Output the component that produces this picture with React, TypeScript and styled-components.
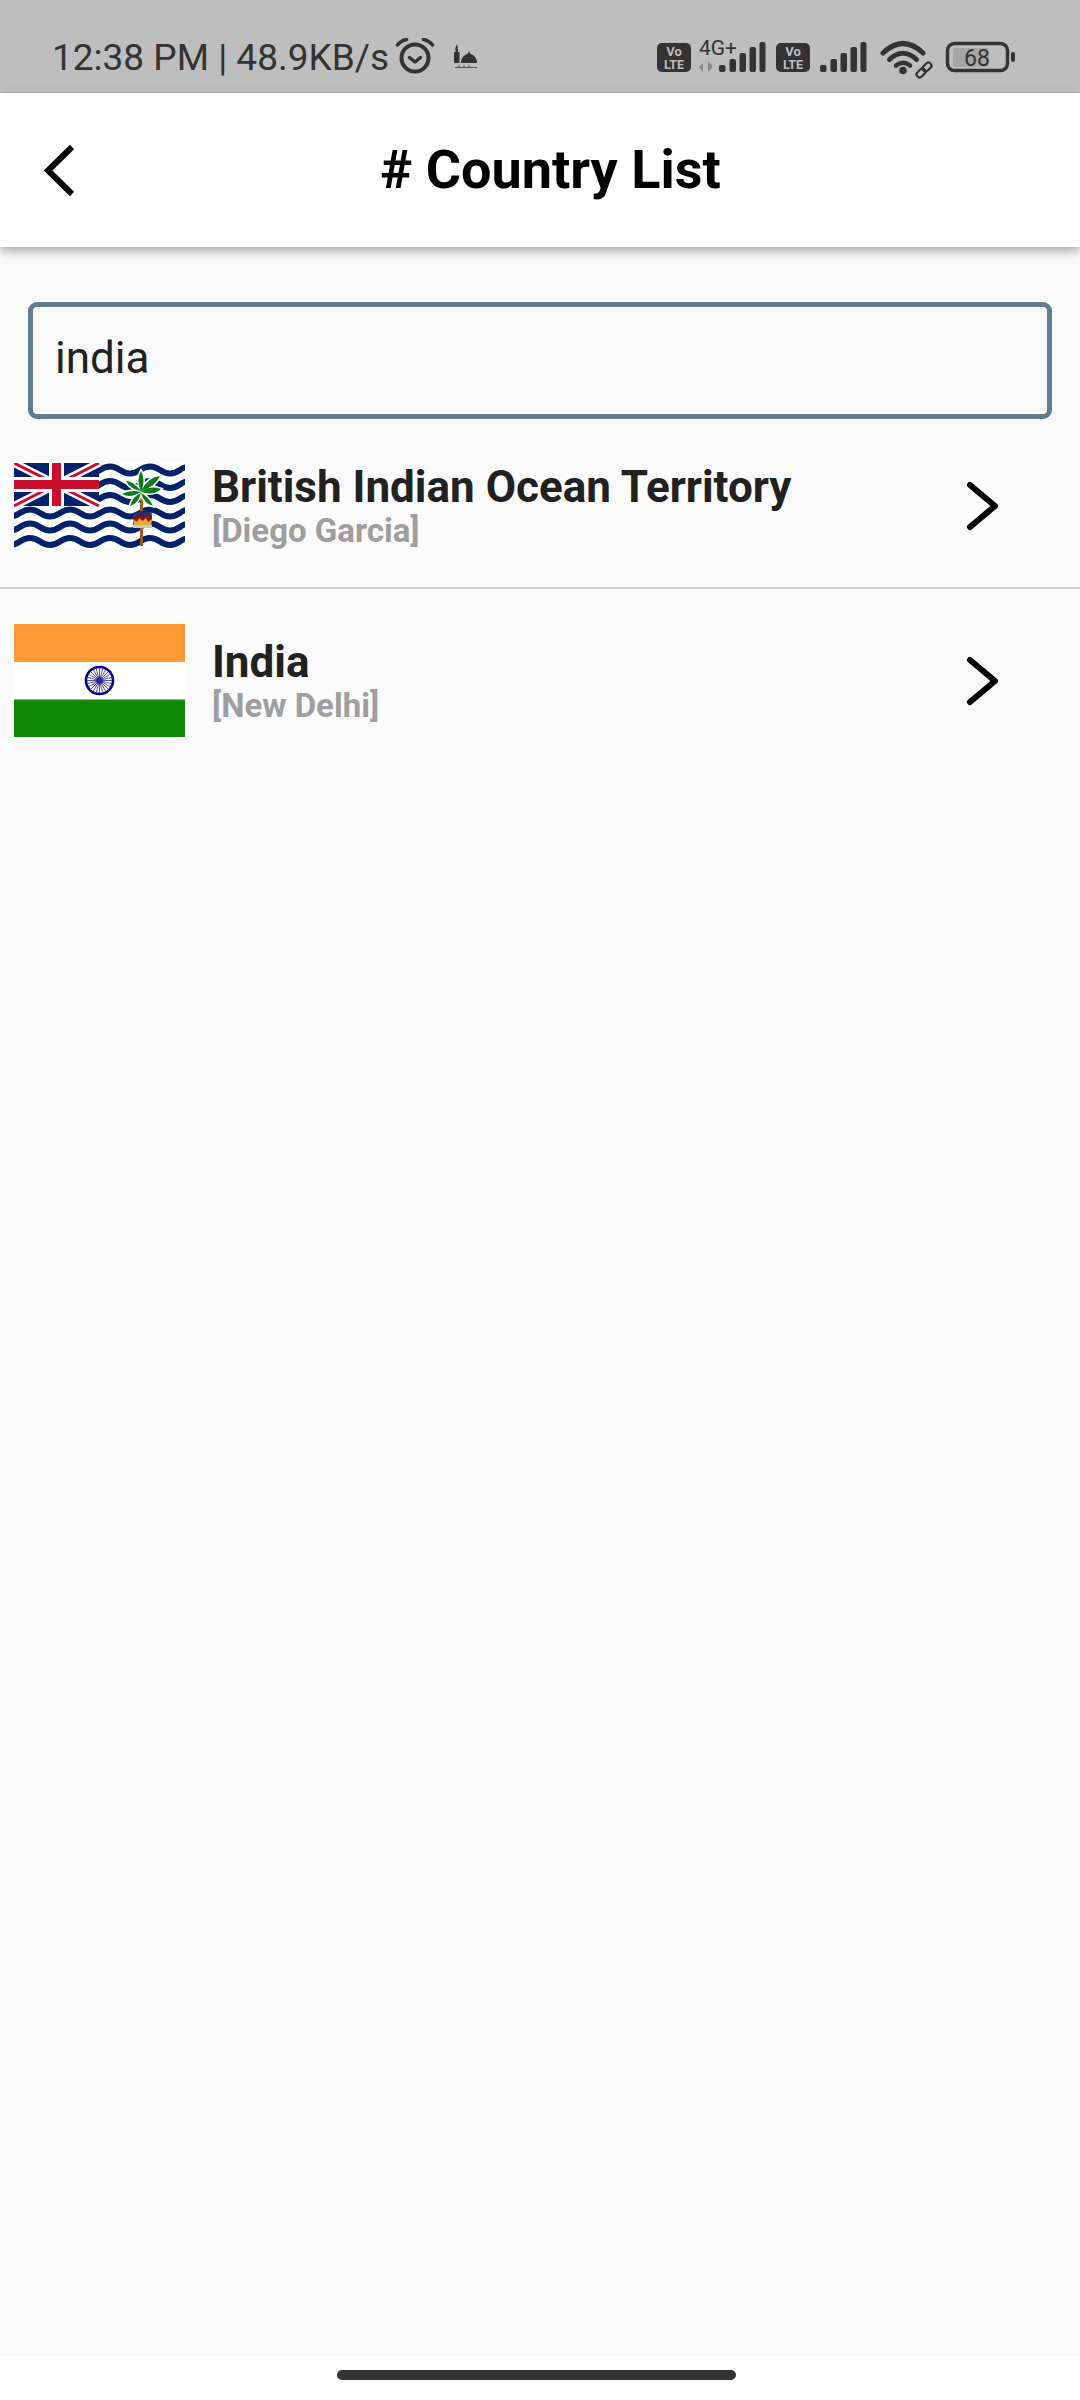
import React from "react";
import styled, { createGlobalStyle } from "styled-components";

const Global = createGlobalStyle`
  html, body { margin: 0; padding: 0; background: #fafafa; }
  * { box-sizing: border-box; }
`;

const Page = styled.div`
  width: 1080px;
  height: 2400px;
  display: flex;
  flex-direction: column;
  font-family: Roboto, "Liberation Sans", sans-serif;
  background: #fafafa;
  overflow: hidden;
`;

const StatusBar = styled.div`
  height: 93px;
  background: #bebebe;
  display: flex;
  align-items: flex-start;
  padding: 36px 0 0 52px;
  color: #333;
  flex: none;
`;

const StatusText = styled.span`
  font-size: 37px;
  line-height: 44px;
  white-space: nowrap;
`;

const AlarmIcon = styled.svg`
  width: 42px;
  height: 40px;
  margin: 2px 0 0 5px;
  flex: none;
`;

const MosqueIcon = styled.svg`
  width: 24px;
  height: 26px;
  margin: 7px 0 0 18px;
  flex: none;
`;

const StatusIcons = styled.svg`
  width: 364px;
  height: 50px;
  margin: 0 59px 0 auto;
  flex: none;
`;

const Header = styled.header`
  height: 154px;
  flex: none;
  background: #fff;
  box-shadow: 0 4px 10px rgba(0, 0, 0, 0.34);
  display: flex;
  align-items: center;
  justify-content: center;
  position: relative;
  padding-left: 21px;
`;

const BackButton = styled.svg`
  position: absolute;
  left: 40px;
  top: 50px;
  width: 40px;
  height: 56px;
`;

const Title = styled.h1`
  margin: 0;
  font-size: 54px;
  line-height: 60px;
  font-weight: 700;
  color: #000;
`;

const SearchBox = styled.div`
  margin: 55px 28px 0 28px;
  height: 117px;
  border: 5px solid #607d8b;
  border-radius: 9px;
  display: flex;
  align-items: center;
  padding: 0 0 6px 22px;
  font-size: 44px;
  color: #212121;
  flex: none;
`;

const List = styled.div`
  display: flex;
  flex-direction: column;
  flex: 1;
`;

const Row = styled.div<{ $height: number; $top: number; $divider?: boolean }>`
  display: flex;
  align-items: center;
  height: ${(p) => p.$height}px;
  padding: ${(p) => p.$top}px 0 0 14px;
  border-bottom: ${(p) => (p.$divider ? "2px solid #cdcdcd" : "none")};
  flex: none;
`;

const Flag = styled.svg<{ $height: number }>`
  width: 171px;
  height: ${(p) => p.$height}px;
  flex: none;
`;

const RowText = styled.div`
  margin-left: 27px;
  flex: 1;
  display: flex;
  flex-direction: column;
`;

const Name = styled.div`
  font-size: 44px;
  line-height: 50px;
  font-weight: 700;
  color: #212121;
`;

const Capital = styled.div`
  font-size: 33px;
  line-height: 38px;
  font-weight: 700;
  color: #9e9e9e;
`;

const Chevron = styled.svg`
  width: 36px;
  height: 56px;
  margin-right: 82px;
  flex: none;
`;

const NavBar = styled.div`
  height: 44px;
  background: #fff;
  flex: none;
  display: flex;
  justify-content: center;
  padding: 14px 7px 0 0;
`;

const NavPill = styled.div`
  width: 399px;
  height: 10px;
  border-radius: 5px;
  background: #333;
`;

const wave = (y: number, x0: number, x1: number) => {
  let d = `M${x0 - 40} ${y}`;
  for (let x = x0 - 40; x < x1; x += 40) {
    d += ` q10 -7 20 0 t20 0`;
  }
  return d;
};

const palmLeaves = [
  "M127 30Q122 16 127 8Q132 16 127 30Z",
  "M127 28Q134 14 146 13Q141 24 127 28Z",
  "M127 28Q118 17 112 18Q116 26 127 28Z",
  "M127 29Q136 22 147 26Q140 33 127 29Z",
  "M127 29Q117 26 108 31Q116 36 127 29Z",
  "M127 30Q119 33 116 43Q124 41 127 30Z",
  "M127 30Q134 33 139 43Q130 41 127 30Z",
];

const BiotFlag = () => (
  <Flag $height={85} viewBox="0 0 171 85">
    <rect width="171" height="85" fill="#fff" />
    {[7, 21.5, 35.5, 50, 64, 78.5].map((y) => (
      <path key={y} d={wave(y, 0, 215)} transform="translate(6 0)" fill="none" stroke="#012169" strokeWidth="5.8" />
    ))}
    <g>
      <rect x="0" y="0" width="85" height="43" fill="#012169" />
      <path d="M0 0L85 43M85 0L0 43" stroke="#fff" strokeWidth="8" />
      <path d="M0 0L42 21M85 43L43 22M85 0L44 21M0 43L41 22" stroke="#c8102e" strokeWidth="3" />
      <rect x="35" y="0" width="15" height="43" fill="#fff" />
      <rect x="0" y="14" width="85" height="15" fill="#fff" />
      <rect x="38" y="0" width="9" height="43" fill="#c8102e" />
      <rect x="0" y="17" width="85" height="9" fill="#c8102e" />
    </g>
    <rect x="126" y="28" width="3" height="55" fill="#9a5b22" />
    <g fill="#fff" stroke="#fff" strokeWidth="3">
      {palmLeaves.map((d) => (
        <path key={d} d={d} />
      ))}
    </g>
    <g fill="#0e7a1a">
      {palmLeaves.map((d) => (
        <path key={d} d={d} />
      ))}
    </g>
    <path d="M119 52h19v10h-19z" fill="#8c1414" />
    <path d="M119 50q9 -4 19 0l-1 3h-17z" fill="#1f2f6a" />
    <path d="M120 63l-1 -7 4 3 2 -4 3.5 3 3.5 -3 2 4 4 -3 -1 7z" fill="#e8ac2c" />
    <rect x="119" y="62" width="19" height="3" fill="#c8c8c8" />
  </Flag>
);

const IndiaFlag = () => (
  <Flag $height={113} viewBox="0 0 171 113">
    <rect width="171" height="38" fill="#ff9933" />
    <rect y="38" width="171" height="37.5" fill="#fff" />
    <rect y="75.5" width="171" height="37.5" fill="#128807" />
    <circle cx="85.5" cy="56.5" r="13.5" fill="#fff" stroke="#000080" strokeWidth="2.6" />
    <circle cx="85.5" cy="56.5" r="3.2" fill="#000080" />
    {Array.from({ length: 24 }).map((_, i) => {
      const a = (i * Math.PI) / 12;
      return (
        <line
          key={i}
          x1={85.5}
          y1={56.5}
          x2={85.5 + 12.5 * Math.cos(a)}
          y2={56.5 + 12.5 * Math.sin(a)}
          stroke="#2a2a9a"
          strokeWidth="0.8"
        />
      );
    })}
  </Flag>
);

const RowChevron = () => (
  <Chevron viewBox="0 0 36 56">
    <path d="M8 7L33 28L8 49" fill="none" stroke="#000" strokeWidth="6" strokeLinecap="round" strokeLinejoin="round" />
  </Chevron>
);

const Bars = ({ x }: { x: number }) => (
  <g fill="#333">
    <rect x={x} y="25" width="6.5" height="7" rx="2" />
    <rect x={x + 10.5} y="19" width="6.5" height="13" rx="2" />
    <rect x={x + 20.5} y="13" width="6.5" height="19" rx="2" />
    <rect x={x + 30.5} y="7" width="6.5" height="25" rx="2" />
    <rect x={x + 40.5} y="2" width="6" height="30" rx="2" />
  </g>
);

const VoLte = ({ x }: { x: number }) => (
  <g>
    <rect x={x} y="3" width="34" height="29" rx="5" fill="#333" />
    <text x={x + 17} y="16" textAnchor="middle" fontSize="13" fontWeight="700" fill="#bebebe" fontFamily="Roboto, sans-serif">Vo</text>
    <text x={x + 17} y="29" textAnchor="middle" fontSize="12.5" fontWeight="700" fill="#bebebe" fontFamily="Roboto, sans-serif">LTE</text>
  </g>
);

export default function App() {
  return (
    <Page>
      <Global />
      <StatusBar>
        <StatusText>12:38 PM | 48.9KB/s</StatusText>
        <AlarmIcon viewBox="0 0 42 40">
          <circle cx="21" cy="20" r="13.5" fill="none" stroke="#333" strokeWidth="4" />
          <path d="M15.5 19.5l5.5 4.5 5.5-4.5" fill="none" stroke="#333" strokeWidth="3.5" strokeLinecap="round" strokeLinejoin="round" />
          <path d="M3.5 7Q7 2.5 12.5 1.5M38.5 7Q35 2.5 29.5 1.5" fill="none" stroke="#333" strokeWidth="3.5" strokeLinecap="round" />
        </AlarmIcon>
        <MosqueIcon viewBox="0 0 24 26">
          <path d="M3 1l1 4-1 1h1v3h1.5v11H0V9h1.5V6H1z" fill="#333" />
          <path d="M7 20c0-5 3-8 7-9.5l1-3 1 3c4 1.500 7 4.500 7 9.500z" fill="#333" />
          <path d="M1 24.500h22M5 22v3M10 22v3M15 22v3" stroke="#555" strokeWidth="1" fill="none" />
        </MosqueIcon>
        <StatusIcons viewBox="0 -4 364 50">
          <VoLte x={0} />
          <text x="42" y="15" fontSize="21" fill="#333" fontFamily="Roboto, sans-serif">4G+</text>
          <path d="M46 32V23l-4 4zM51 32V21l4 4v3z" fill="#8a8a8a" />
          <Bars x={62} />
          <VoLte x={119} />
          <Bars x={163} />
          <g fill="none" stroke="#333" strokeLinecap="round">
            <path d="M226 13Q246 -6 266 13" strokeWidth="5" />
            <path d="M232.500 19.500Q246 7 259.500 19.500" strokeWidth="5" />
            <path d="M239 25.500Q246 20 253 25.500" strokeWidth="4.500" />
          </g>
          <circle cx="246" cy="30.500" r="3.800" fill="#333" />
          <g fill="none" stroke="#333" strokeWidth="2.200">
            <rect x="259" y="30" width="10" height="6" rx="3" transform="rotate(-45 264 33)" />
            <rect x="265" y="24" width="10" height="6" rx="3" transform="rotate(-45 270 27)" />
          </g>
          <rect x="290.500" y="3.500" width="60" height="27" rx="7" fill="none" stroke="#333" strokeWidth="3.500" />
          <rect x="296" y="8" width="36" height="19" rx="2" fill="#a6a6a6" />
          <text x="320" y="25.500" textAnchor="middle" fontSize="23" fill="#333" fontFamily="Roboto, sans-serif">68</text>
          <rect x="354" y="12" width="4" height="10" rx="2" fill="#333" />
        </StatusIcons>
      </StatusBar>
      <Header>
        <BackButton viewBox="0 0 40 56">
          <path d="M32 4L8 27.500L32 51" fill="none" stroke="#000" strokeWidth="6" />
        </BackButton>
        <Title># Country List</Title>
      </Header>
      <SearchBox>india</SearchBox>
      <List>
        <Row $height={170} $top={5} $divider>
          <BiotFlag />
          <RowText>
            <Name>British Indian Ocean Territory</Name>
            <Capital>[Diego Garcia]</Capital>
          </RowText>
          <RowChevron />
        </Row>
        <Row $height={172} $top={11}>
          <IndiaFlag />
          <RowText>
            <Name>India</Name>
            <Capital>[New Delhi]</Capital>
          </RowText>
          <RowChevron />
        </Row>
      </List>
      <NavBar>
        <NavPill />
      </NavBar>
    </Page>
  );
}
